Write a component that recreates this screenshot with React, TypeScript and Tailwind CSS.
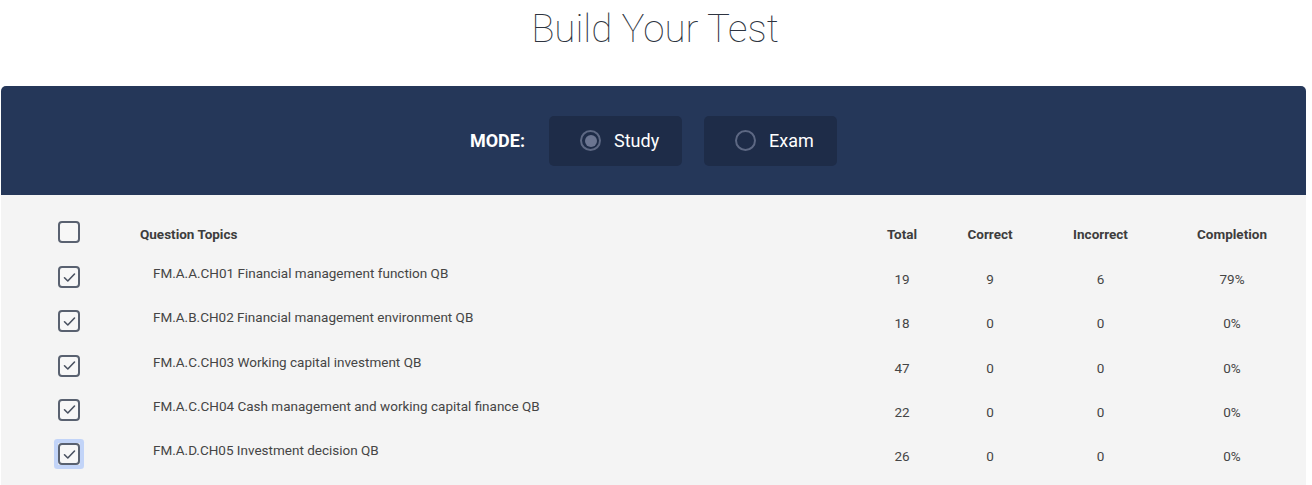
import React from 'react';

const topics = [
  { name: 'FM.A.A.CH01 Financial management function QB', total: 19, correct: 9, incorrect: 6, completion: '79%' },
  { name: 'FM.A.B.CH02 Financial management environment QB', total: 18, correct: 0, incorrect: 0, completion: '0%' },
  { name: 'FM.A.C.CH03 Working capital investment QB', total: 47, correct: 0, incorrect: 0, completion: '0%' },
  { name: 'FM.A.C.CH04 Cash management and working capital finance QB', total: 22, correct: 0, incorrect: 0, completion: '0%' },
  { name: 'FM.A.D.CH05 Investment decision QB', total: 26, correct: 0, incorrect: 0, completion: '0%' },
];

const Checkbox = ({ checked, focused }: { checked: boolean; focused?: boolean }) => (
  <div className={focused ? 'w-fit rounded-[1px] ring-4 ring-[#c2d4f8]' : 'w-fit'}>
    <div className="flex h-[22px] w-[22px] items-center justify-center rounded-[4px] border-2 border-[#596170] bg-[#f7f7f7]">
      {checked && (
        <svg width="13" height="11" viewBox="0 0 13 11" fill="none">
          <path d="M1.5 5.8 L4.8 9 L11.5 2" stroke="#4a5261" strokeWidth="1.6" strokeLinecap="round" strokeLinejoin="round" />
        </svg>
      )}
    </div>
  </div>
);

const ModeButton = ({ label, selected }: { label: string; selected: boolean }) => (
  <div className="flex h-[50px] w-[133px] items-center rounded-[5px] bg-[#1e2c48] pl-[31px]">
    <div className="flex h-[21px] w-[21px] items-center justify-center rounded-full border-2 border-[#5d6883]">
      {selected && <div className="h-[12px] w-[12px] rounded-full bg-[#6b7591]" />}
    </div>
    <span className="ml-[13px] text-[18px] text-white">{label}</span>
  </div>
);

const App = () => {
  return (
    <div className="min-h-[485px] bg-white font-['Roboto',sans-serif]">
      <h1 className="pt-[5px] pr-[2px] text-center text-[38.5px] font-thin leading-[48px] text-[#2e3440]">
        Build Your Test
      </h1>

      <div className="ml-[1px] mt-[33px] w-[1305px] overflow-hidden rounded-t-[5px]">
        <div className="flex h-[109px] items-center justify-center bg-[#253759]">
          <span className="mr-[24px] text-[18px] font-bold text-white">MODE:</span>
          <div className="flex gap-[22px]">
            <ModeButton label="Study" selected />
            <ModeButton label="Exam" selected={false} />
          </div>
        </div>

        <div className="bg-[#f4f4f4] pb-[10px] text-[13.5px] text-[#454545]">
          <div className="grid h-[60px] grid-cols-[139px_727px_70px_106px_115px_148px] items-start">
            <div className="pl-[57px] pt-[26px]">
              <Checkbox checked={false} />
            </div>
            <div className="pt-[29px] font-bold leading-[20px] text-[#3d3d3d]">Question Topics</div>
            <div className="pt-[29px] text-center font-bold leading-[20px] text-[#3d3d3d]">Total</div>
            <div className="pt-[29px] text-center font-bold leading-[20px] text-[#3d3d3d]">Correct</div>
            <div className="pt-[29px] text-center font-bold leading-[20px] text-[#3d3d3d]">Incorrect</div>
            <div className="pt-[29px] text-center font-bold leading-[20px] text-[#3d3d3d]">Completion</div>
          </div>

          {topics.map((t, i) => (
            <div
              key={t.name}
              className="grid h-[44.25px] grid-cols-[139px_727px_70px_106px_115px_148px] items-start leading-[20px]"
            >
              <div className="pl-[57px] pt-[11px]">
                <Checkbox checked focused={i === topics.length - 1} />
              </div>
              <div className="pl-[13px] pt-[8px]">{t.name}</div>
              <div className="pt-[14px] text-center">{t.total}</div>
              <div className="pt-[14px] text-center">{t.correct}</div>
              <div className="pt-[14px] text-center">{t.incorrect}</div>
              <div className="pt-[14px] text-center">{t.completion}</div>
            </div>
          ))}
        </div>
      </div>
    </div>
  );
};

export default App;
